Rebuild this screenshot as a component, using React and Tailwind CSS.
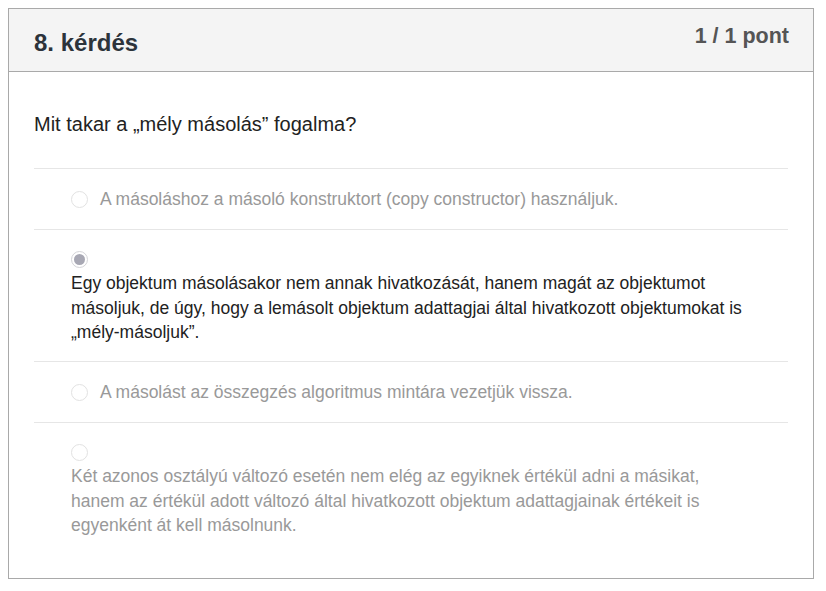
const options = [
  {
    text: "A másoláshoz a másoló konstruktort (copy constructor) használjuk.",
    checked: false,
    inline: true,
  },
  {
    text: "Egy objektum másolásakor nem annak hivatkozását, hanem magát az objektumot másoljuk, de úgy, hogy a lemásolt objektum adattagjai által hivatkozott objektumokat is „mély-másoljuk”.",
    checked: true,
    inline: false,
  },
  {
    text: "A másolást az összegzés algoritmus mintára vezetjük vissza.",
    checked: false,
    inline: true,
  },
  {
    text: "Két azonos osztályú változó esetén nem elég az egyiknek értékül adni a másikat, hanem az értékül adott változó által hivatkozott objektum adattagjainak értékeit is egyenként át kell másolnunk.",
    checked: false,
    inline: false,
  },
];

const Radio = ({ checked }) => (
  <span
    className={`flex h-[17px] w-[17px] shrink-0 items-center justify-center rounded-full border ${
      checked ? "border-[#d4d4d8] bg-white" : "border-[#e2e2e2] bg-white"
    }`}
  >
    {checked && <span className="h-[11px] w-[11px] rounded-full bg-[#a8a8b4]" />}
  </span>
);

const App = () => {
  return (
    <div className="min-h-[591px] bg-white pt-2 pl-2 font-['Liberation_Sans',Arial,sans-serif]">
      <div className="w-[806px] border border-[#a9a9a9] bg-white">
        {/* Header */}
        <div className="flex h-[63px] items-center justify-between border-b border-[#a9a9a9] bg-[#f4f4f4] pl-[25px] pr-[24px]">
          <h2 className="pt-[6px] text-[24px] font-bold text-[#2c333b]">8. kérdés</h2>
          <span className="-mt-[7px] text-[21.5px] font-bold text-[#555]">1 / 1 pont</span>
        </div>

        {/* Body */}
        <div className="px-[25px] pb-[24px]">
          <p className="pt-[40px] pb-[32px] text-[20px] leading-[24px] text-[#222]">
            Mit takar a „mély másolás” fogalma?
          </p>
          {options.map((opt, i) => (
            <div key={i} className="border-t border-[#e6e6e6] pl-[37px]">
              {opt.inline ? (
                <div className="flex h-[60px] items-center gap-[12px]">
                  <Radio checked={opt.checked} />
                  <span className="text-[17.5px] text-[#999]">{opt.text}</span>
                </div>
              ) : (
                <div className="pt-[21px] pb-[16.5px]">
                  <Radio checked={opt.checked} />
                  <p
                    className={`mt-[3px] w-[676px] text-[17.5px] leading-[24.5px] ${
                      opt.checked ? "text-[#222]" : "text-[#999]"
                    }`}
                  >
                    {opt.text}
                  </p>
                </div>
              )}
            </div>
          ))}
        </div>
      </div>
    </div>
  );
};

export default App;
